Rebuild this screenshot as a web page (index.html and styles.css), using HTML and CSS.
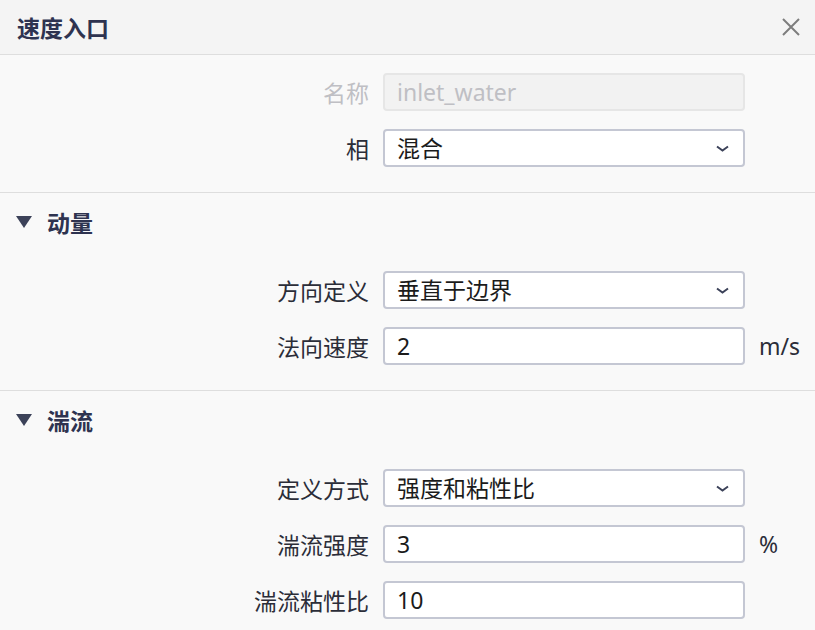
FILE: index.html
```html
<!DOCTYPE html>
<html lang="zh">
<head>
    <meta charset="utf-8">
    <title>速度入口</title>
    <link rel="stylesheet" href="styles.css">
</head>
<body>
<div class="panel">
    <div class="panel-header">
        <h1>速度入口</h1>
        <button class="close" type="button" aria-label="关闭">
            <svg width="20" height="20" viewBox="0 0 20 20"><path d="M2 2L18 18M18 2L2 18" stroke="#7d7d7d" stroke-width="2" fill="none"/></svg>
        </button>
    </div>

    <div class="section">
        <div class="form">
            <label class="disabled" for="name">名称</label>
            <input id="name" type="text" value="inlet_water" disabled>
            <span></span>

            <label for="phase">相</label>
            <select id="phase">
                <option>混合</option>
            </select>
            <span></span>
        </div>
    </div>

    <div class="section">
        <div class="section-title">
            <span class="caret"></span>
            <h2>动量</h2>
        </div>
        <div class="form">
            <label for="direction">方向定义</label>
            <select id="direction">
                <option>垂直于边界</option>
            </select>
            <span></span>

            <label for="velocity">法向速度</label>
            <input id="velocity" type="text" value="2">
            <span class="unit">m/s</span>
        </div>
    </div>

    <div class="section">
        <div class="section-title">
            <span class="caret"></span>
            <h2>湍流</h2>
        </div>
        <div class="form">
            <label for="method">定义方式</label>
            <select id="method">
                <option>强度和粘性比</option>
            </select>
            <span></span>

            <label for="intensity">湍流强度</label>
            <input id="intensity" type="text" value="3">
            <span class="unit">%</span>

            <label for="ratio">湍流粘性比</label>
            <input id="ratio" type="text" value="10">
            <span></span>
        </div>
    </div>
</div>
</body>
</html>
```

FILE: styles.css
```css
:root {
    --header-bg: #f4f4f4;
    --body-bg: #f9f9f9;
    --divider: #dedede;
    --title: #2e3350;
    --text: #2b2d38;
    --value: #1b1b1b;
    --muted: #bfbfc4;
    --field-border: #c4c7d3;
    --caret: #3c4259;
}

html {
    box-sizing: border-box;
}

*, *:before, *:after {
    box-sizing: inherit;
}

body {
    margin: 0;
    font-family: "Noto Sans", "Noto Sans CJK SC", sans-serif;
    background-color: var(--body-bg);
    color: var(--text);
}

.panel {
    width: 815px;
    min-height: 630px;
    background-color: var(--body-bg);
}

.panel-header {
    height: 55px;
    display: flex;
    align-items: center;
    justify-content: space-between;
    padding: 0 14px 0 17px;
    background-color: var(--header-bg);
    border-bottom: 1px solid var(--divider);
}

h1 {
    margin: 0;
    font-size: 23px;
    font-weight: bold;
    color: var(--title);
}

.close {
    border: none;
    background: none;
    padding: 0;
    width: 20px;
    height: 20px;
    cursor: pointer;
}

.section {
    border-bottom: 1px solid var(--divider);
    padding-bottom: 25px;
}

.section:last-child {
    border-bottom: none;
}

/* collapsible group heading */
.section-title {
    height: 60px;
    display: flex;
    align-items: center;
    padding: 0 0 3px 16px;
}

.caret {
    width: 0;
    height: 0;
    border-left: 8px solid transparent;
    border-right: 8px solid transparent;
    border-top: 12px solid var(--caret);
    margin-right: 15px;
}

h2 {
    margin: 0;
    font-size: 23px;
    font-weight: bold;
    color: var(--title);
}

.form {
    display: grid;
    grid-template-columns: 369px 362px auto;
    column-gap: 14px;
    row-gap: 18px;
    align-items: center;
    padding-top: 18px;
}

label {
    text-align: right;
    font-size: 23px;
    color: var(--text);
}

label.disabled {
    color: var(--muted);
}

input,
select {
    width: 100%;
    height: 38px;
    padding: 0 12px;
    font-family: "Noto Sans", "Noto Sans CJK SC", sans-serif;
    font-size: 23px;
    color: var(--value);
    background-color: #fff;
    border: 2px solid var(--field-border);
    border-radius: 4px;
    outline: none;
    appearance: none;
}

input:disabled {
    background-color: #f2f2f2;
    border-color: #e6e6e6;
    color: var(--muted);
}

select {
    background-image: url("data:image/svg+xml,%3csvg xmlns='http://www.w3.org/2000/svg' viewBox='0 0 13 7'%3e%3cpath d='M1 1.5l5.5 4 5.5-4' fill='none' stroke='%233c4259' stroke-width='2'/%3e%3c/svg%3e");
    background-repeat: no-repeat;
    background-position: right 14px center;
    background-size: 13px 7px;
    padding-right: 40px;
}

.unit {
    font-size: 23px;
    color: var(--text);
}
```
